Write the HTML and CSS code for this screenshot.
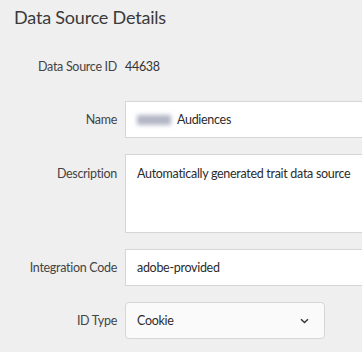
FILE: index.html
```html
<!DOCTYPE html>
<html>
<head>
<meta charset="utf-8">
<link rel="stylesheet" href="styles.css">
</head>
<body>
<div class="page">
  <h1 class="title">Data Source Details</h1>
  <div class="form">
    <div class="label">Data Source ID</div>
    <div class="value">44638</div>

    <div class="label">Name</div>
    <div class="field input"><span class="redacted"></span>Audiences</div>

    <div class="label label-top">Description</div>
    <div class="field textarea">Automatically generated trait data source</div>

    <div class="label">Integration Code</div>
    <div class="field input">adobe-provided</div>

    <div class="label">ID Type</div>
    <div class="field select">
      <span>Cookie</span>
      <svg class="chevron" width="9" height="6" viewBox="0 0 9 6"><path d="M1 1.2 L4.5 4.5 L8 1.2" fill="none" stroke="#333" stroke-width="1.4"/></svg>
    </div>
  </div>
</div>
</body>
</html>
```
FILE: styles.css
```css
html, body {
  margin: 0;
  padding: 0;
  background: #efefef;
  overflow: hidden;
}
.page {
  font-family: Lato, "Open Sans", sans-serif;
  color: #4b4b4b;
  padding: 6px 0 0 14px;
}
.title {
  margin: 0;
  font-weight: 400;
  font-size: 18px;
  line-height: 22px;
  letter-spacing: -0.2px;
  color: #3a3a3a;
}
.form {
  display: grid;
  grid-template-columns: 103px 260px;
  column-gap: 8px;
  row-gap: 16px;
  margin-top: 20px;
  font-size: 12.5px;
  letter-spacing: -0.3px;
}
.label {
  text-align: right;
  align-self: center;
  color: #444;
}
.label-top {
  align-self: start;
  padding-top: 12px;
}
.value {
  align-self: center;
  color: #333;
  height: 37px;
  line-height: 37px;
}
.field {
  box-sizing: border-box;
  border: 1px solid #d6d6d6;
  background: #fff;
  color: #2c2c2c;
  padding: 0 11px;
  display: flex;
  align-items: center;
}
.input {
  height: 37px;
}
.textarea {
  height: 79px;
  align-items: flex-start;
  padding-top: 11px;
}
.select {
  width: 200px;
  height: 37px;
  border-radius: 4px;
  background: #fafafa;
  justify-content: space-between;
  padding-right: 15px;
}
.redacted {
  display: inline-block;
  width: 34px;
  height: 10px;
  margin-right: 6px;
  background: #b3b6c6;
  filter: blur(2px);
}
```
